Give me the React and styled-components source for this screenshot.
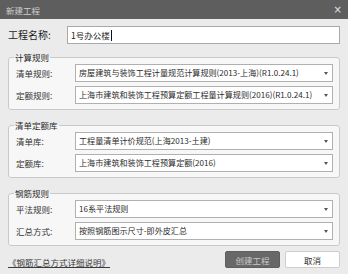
import React from 'react';
import styled, { createGlobalStyle } from 'styled-components';

const GlobalStyle = createGlobalStyle`
  html, body {
    margin: 0;
    padding: 0;
  }
  body {
    background: #ebebeb;
    font-family: "Noto Sans CJK SC", "Liberation Sans", sans-serif;
  }
`;

const Window = styled.div`
  width: 348px;
  height: 274px;
  display: flex;
  flex-direction: column;
  background: #ebebeb;
  overflow: hidden;
`;

const TitleBar = styled.div`
  flex: none;
  height: 19px;
  padding: 0 6px;
  display: flex;
  align-items: center;
  justify-content: space-between;
  background: #5e5e5e;
  color: #cfcfcf;
  font-size: 8.5px;
  line-height: 10px;
`;

const Close = styled.span`
  font-family: "DejaVu Sans", sans-serif;
  font-size: 10px;
  line-height: 10px;
  color: #e4e4e4;
`;

const Body = styled.div`
  display: flex;
  flex-direction: column;
  padding: 7px 8px 0 8px;
`;

const NameRow = styled.div`
  display: flex;
  align-items: center;
  height: 18px;
`;

const NameLabel = styled.span`
  width: 59px;
  flex: none;
  font-size: 10px;
  line-height: 12px;
  color: #1c1c1c;
`;

const Field = styled.div`
  flex: 1;
  height: 18px;
  box-sizing: border-box;
  padding-left: 3px;
  display: flex;
  align-items: center;
  border: 1px solid #a9a9a9;
  background: #fff;
  font-size: 8.5px;
  line-height: 10px;
  color: #222;
`;

const Caret = styled.span`
  width: 1px;
  height: 11px;
  margin-left: 1px;
  background: #111;
`;

const Group = styled.fieldset`
  margin: ${({ first }) => (first ? '8px' : '10px')} 0 0 0;
  padding: 2px 6px 5px 7px;
  min-inline-size: 0;
  border: 1px solid #c9c9c9;
  border-radius: 3px;
  background: #f7f7f7;
  display: flex;
  flex-direction: column;
  gap: 4px;
`;

const Legend = styled.legend`
  margin-left: -2px;
  padding: 0 1px;
  font-size: 8.5px;
  line-height: 10px;
  color: #2a2a2a;
`;

const Row = styled.div`
  display: flex;
  align-items: center;
  height: 18px;
`;

const RowLabel = styled.span`
  width: 59px;
  flex: none;
  font-size: 8.5px;
  line-height: 10px;
  color: #333;
`;

const Dropdown = styled.div`
  flex: 1;
  min-width: 0;
  height: 18px;
  box-sizing: border-box;
  padding: 0 4px 0 3px;
  display: flex;
  align-items: center;
  border: 1px solid #b0b0b0;
  background: #fff;
  font-size: 8.1px;
  line-height: 10px;
  color: #2b2b2b;
  white-space: nowrap;
`;

const DropText = styled.span`
  flex: 1;
  overflow: hidden;
`;

const Arrow = styled.span`
  flex: none;
  width: 0;
  height: 0;
  margin-left: 3px;
  border-left: 2px solid transparent;
  border-right: 2px solid transparent;
  border-top: 3px solid #555;
`;

const Footer = styled.div`
  display: flex;
  align-items: center;
  gap: 5px;
  height: 17px;
  margin-top: 5px;
`;

const HelpLink = styled.a`
  flex: 1;
  align-self: flex-end;
  font-size: 8.5px;
  line-height: 12px;
  color: #3a3a3a;
  text-decoration: underline;
`;

const Button = styled.button`
  width: 55px;
  height: 17px;
  padding: 0;
  box-sizing: border-box;
  border-radius: 2px;
  font-family: inherit;
  font-size: 8.5px;
  line-height: 10px;
  border: 1px solid ${({ primary }) => (primary ? '#5f5f5f' : '#cdcdcd')};
  background: ${({ primary }) => (primary ? '#686868' : '#ffffff')};
  color: ${({ primary }) => (primary ? '#c8c8c8' : '#2a2a2a')};
`;

const groups = [
  {
    title: '计算规则',
    rows: [
      ['清单规则:', '房屋建筑与装饰工程计量规范计算规则(2013-上海)(R1.0.24.1)'],
      ['定额规则:', '上海市建筑和装饰工程预算定额工程量计算规则(2016)(R1.0.24.1)'],
    ],
  },
  {
    title: '清单定额库',
    rows: [
      ['清单库:', '工程量清单计价规范(上海2013-土建)'],
      ['定额库:', '上海市建筑和装饰工程预算定额(2016)'],
    ],
  },
  {
    title: '钢筋规则',
    rows: [
      ['平法规则:', '16系平法规则'],
      ['汇总方式:', '按照钢筋图示尺寸-即外皮汇总'],
    ],
  },
];

const App = () => (
  <>
    <GlobalStyle />
    <Window>
      <TitleBar>
        <span>新建工程</span>
        <Close>×</Close>
      </TitleBar>
      <Body>
        <NameRow>
          <NameLabel>工程名称:</NameLabel>
          <Field>
            1号办公楼
            <Caret />
          </Field>
        </NameRow>
        {groups.map((group, i) => (
          <Group key={group.title} first={i === 0}>
            <Legend>{group.title}</Legend>
            {group.rows.map(([label, value]) => (
              <Row key={label}>
                <RowLabel>{label}</RowLabel>
                <Dropdown>
                  <DropText>{value}</DropText>
                  <Arrow />
                </Dropdown>
              </Row>
            ))}
          </Group>
        ))}
        <Footer>
          <HelpLink>《钢筋汇总方式详细说明》</HelpLink>
          <Button primary type="button">创建工程</Button>
          <Button type="button">取消</Button>
        </Footer>
      </Body>
    </Window>
  </>
);

export default App;
